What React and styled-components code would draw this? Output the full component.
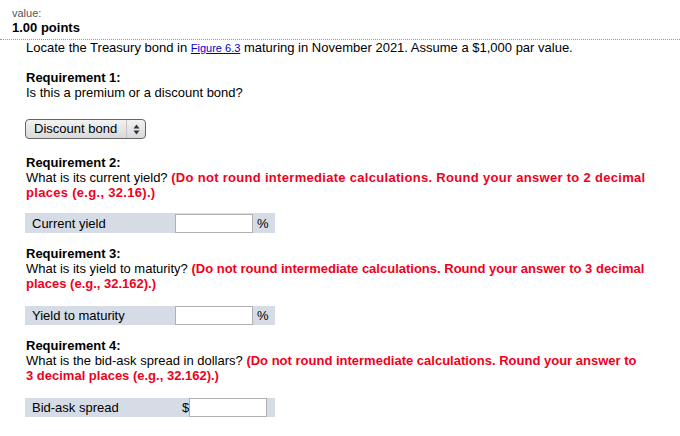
import React from "react";
import styled, { createGlobalStyle } from "styled-components";

const GlobalStyle = createGlobalStyle`
  body {
    margin: 0;
    background: #fff;
    font-family: "Liberation Sans", Arial, sans-serif;
    font-size: 13px;
    color: #000;
  }
`;

const Page = styled.div`
  width: 680px;
  height: 436px;
  overflow: hidden;
`;

const Header = styled.div`
  padding: 7px 12px 4px;
`;

const ValueLabel = styled.div`
  font-size: 11px;
  color: #555;
  line-height: 13px;
`;

const Points = styled.div`
  font-weight: bold;
  font-size: 13px;
  line-height: 15px;
`;

const Divider = styled.div`
  border-top: 1px dotted #999;
`;

const Body = styled.div`
  padding: 0 25px;
  line-height: 15px;
`;

const Intro = styled.p`
  margin: 0 0 0 1px;
`;

const Figure = styled.a`
  font-size: 11px;
  color: #00c;
  text-decoration: underline;
`;

const Requirement = styled.div`
  margin-top: ${(p) => p.$top}px;
  padding-left: 1px;
  white-space: nowrap;
`;

const ReqTitle = styled.div`
  font-weight: bold;
`;

const Note = styled.span`
  color: #f0001c;
  font-weight: bold;
  letter-spacing: ${(p) => p.$ls}px;
`;

const SelectBox = styled.div`
  margin-top: 19px;
  display: flex;
  align-items: center;
  height: 18px;
  width: 119px;
  border: 1px solid #666;
  border-radius: 4px;
  background: linear-gradient(#f2f2f2, #d9d9d9);
`;

const SelectText = styled.span`
  flex: 1;
  padding-left: 8px;
  line-height: 18px;
`;

const SelectArrow = styled.span`
  width: 18px;
  height: 18px;
  border-left: 1px solid #c4c4c4;
  display: flex;
  align-items: center;
  justify-content: center;
`;

const AnswerRow = styled.div`
  margin-top: ${(p) => p.$top}px;
  width: 250px;
  height: ${(p) => p.$h}px;
  background: #d5dce6;
  display: flex;
  align-items: center;
`;

const RowLabel = styled.span`
  width: ${(p) => p.$w}px;
  padding-left: 7px;
  box-sizing: border-box;
  flex: none;
`;

const Input = styled.div`
  width: 78px;
  height: 19px;
  background: #fff;
  border: 1px solid #b0b0b0;
  box-sizing: border-box;
  flex: none;
`;

const Unit = styled.span`
  padding: 0 ${(p) => p.$pad}px;
`;

function Arrows() {
  return (
    <svg width="7" height="11" viewBox="0 0 7 11">
      <path d="M3.5 0.5 L6.5 4.5 H0.5 Z" fill="#333" />
      <path d="M3.5 10.5 L6.5 6.5 H0.5 Z" fill="#333" />
    </svg>
  );
}

export default function App() {
  return (
    <Page>
      <GlobalStyle />
      <Header>
        <ValueLabel>value:</ValueLabel>
        <Points>1.00 points</Points>
      </Header>
      <Divider />
      <Body>
        <Intro>
          Locate the Treasury bond in <Figure href="#">Figure 6.3</Figure> maturing in
          November 2021. Assume a $1,000 par value.
        </Intro>

        <Requirement $top={14}>
          <ReqTitle>Requirement 1:</ReqTitle>
          Is this a premium or a discount bond?
        </Requirement>
        <SelectBox>
          <SelectText>Discount bond</SelectText>
          <SelectArrow>
            <Arrows />
          </SelectArrow>
        </SelectBox>

        <Requirement $top={16}>
          <ReqTitle>Requirement 2:</ReqTitle>
          What is its current yield?{" "}
          <Note $ls={0.3}>
            (Do not round intermediate calculations. Round your answer to 2 decimal
            <br />
            places (e.g., 32.16).)
          </Note>
        </Requirement>
        <AnswerRow $top={13} $h={20}>
          <RowLabel $w={150}>Current yield</RowLabel>
          <Input />
          <Unit $pad={4}>%</Unit>
        </AnswerRow>

        <Requirement $top={13}>
          <ReqTitle>Requirement 3:</ReqTitle>
          What is its yield to maturity?{" "}
          <Note $ls={0}>
            (Do not round intermediate calculations. Round your answer to 3 decimal
            <br />
            places (e.g., 32.162).)
          </Note>
        </Requirement>
        <AnswerRow $top={15} $h={19}>
          <RowLabel $w={150}>Yield to maturity</RowLabel>
          <Input />
          <Unit $pad={4}>%</Unit>
        </AnswerRow>

        <Requirement $top={13}>
          <ReqTitle>Requirement 4:</ReqTitle>
          What is the bid-ask spread in dollars?{" "}
          <Note $ls={0}>
            (Do not round intermediate calculations. Round your answer to
            <br />
            3 decimal places (e.g., 32.162).)
          </Note>
        </Requirement>
        <AnswerRow $top={15} $h={19}>
          <RowLabel $w={157}>Bid-ask spread</RowLabel>
          <Unit $pad={0}>$</Unit>
          <Input />
        </AnswerRow>
      </Body>
    </Page>
  );
}
